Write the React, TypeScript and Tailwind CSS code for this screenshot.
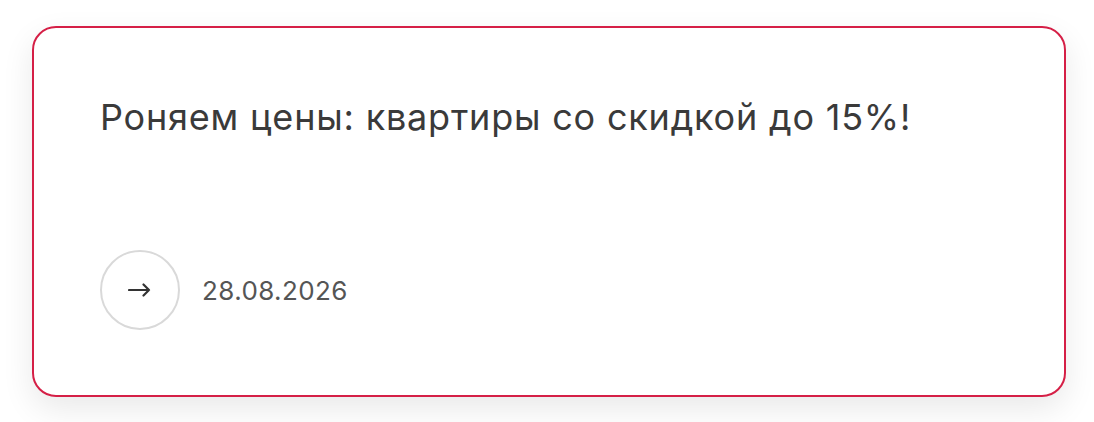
export default function App() {
  return (
    <div className="min-h-[422px] w-full bg-white pl-[32px] pt-[26px]">
      <div className="flex h-[371px] w-[1034px] flex-col justify-between rounded-[24px] border-2 border-[#d51f46] bg-white px-[66px] pb-[65px] pt-[68px] shadow-[0_12px_32px_rgba(0,0,0,0.09)]">
        <h2 className="font-['Inter',sans-serif] text-[36px] leading-[1.2] tracking-[0.8px] text-[#3a3a3a]">
          Роняем цены: квартиры со скидкой до 15%!
        </h2>
        <div className="flex items-center gap-[22px]">
          <button
            type="button"
            className="flex h-[80px] w-[80px] items-center justify-center rounded-full border-2 border-[#d9d9d9]"
          >
            {/* arrow glyph */}
            <svg width="24" height="14" viewBox="0 0 24 14" fill="none" className="text-[#333]">
              <path
                d="M1 7h20M15.5 1.5 21 7l-5.5 5.5"
                stroke="currentColor"
                strokeWidth="2.2"
                strokeLinecap="round"
                strokeLinejoin="round"
              />
            </svg>
          </button>
          <span className="font-['Inter',sans-serif] text-[26px] tracking-[0.4px] text-[#555]">
            28.08.2026
          </span>
        </div>
      </div>
    </div>
  );
}
